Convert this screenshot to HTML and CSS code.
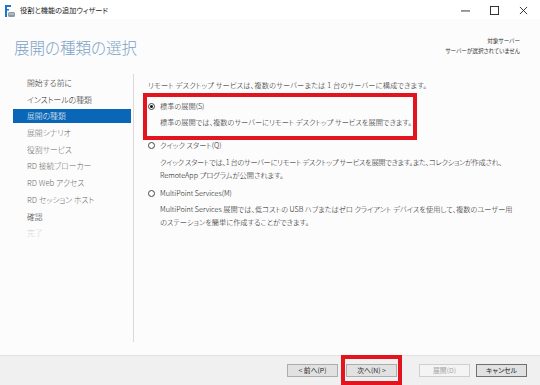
FILE: index.html
```html
<!DOCTYPE html>
<html lang="ja">
<head>
  <meta charset="UTF-8" />
  <title>役割と機能の追加ウィザード</title>
  <link rel="stylesheet" href="styles.css">
</head>
<body>
  <div class="titlebar">
    <svg class="app-icon" width="10" height="12" viewBox="0 0 10 12">
      <rect x="0" y="0" width="2" height="12" fill="#1f74c9"/>
      <rect x="0" y="0" width="6" height="2" fill="#1f74c9"/>
      <rect x="0" y="4" width="4" height="1.5" fill="#1f74c9"/>
      <rect x="3" y="7" width="7" height="5" rx="1.5" fill="#8d9aa8"/>
      <rect x="4" y="8.5" width="5" height="1" fill="#c9d3dc"/>
    </svg>
    <span class="title">役割と機能の追加ウィザード</span>
    <div class="controls">
      <svg width="10" height="10" viewBox="0 0 10 10"><line x1="0" y1="5.5" x2="10" y2="5.5" stroke="#222" stroke-width="1"/></svg>
      <svg width="10" height="10" viewBox="0 0 10 10"><rect x="0.5" y="0.5" width="9" height="9" fill="none" stroke="#222" stroke-width="1"/></svg>
      <svg width="10" height="10" viewBox="0 0 10 10"><path d="M1 1 L9 9 M9 1 L1 9" stroke="#222" stroke-width="1"/></svg>
    </div>
  </div>

  <div class="header">
    <h1>展開の種類の選択</h1>
    <div class="target">
      <div>対象サーバー</div>
      <div>サーバーが選択されていません</div>
    </div>
  </div>

  <div class="main">
    <ul class="steps">
      <li class="done">開始する前に</li>
      <li class="done">インストールの種類</li>
      <li class="current">展開の種類</li>
      <li>展開シナリオ</li>
      <li>役割サービス</li>
      <li>RD 接続ブローカー</li>
      <li>RD Web アクセス</li>
      <li>RD セッション ホスト</li>
      <li class="done">確認</li>
      <li class="off">完了</li>
    </ul>

    <div class="content">
      <p class="intro">リモート デスクトップ サービスは、複数のサーバーまたは 1 台のサーバーに構成できます。</p>

      <div class="opt marked">
        <div class="radio-row"><span class="radio checked"></span>標準の展開(S)</div>
        <p class="desc">標準の展開では、複数のサーバーにリモート デスクトップ サービスを展開できます。</p>
      </div>

      <div class="opt">
        <div class="radio-row"><span class="radio"></span>クイック スタート(Q)</div>
        <p class="desc"><span class="tight">クイック スタートでは、1 台のサーバーにリモート デスクトップ サービスを展開できます。また、コレクションが作成され、</span><br>RemoteApp プログラムが公開されます。</p>
      </div>

      <div class="opt opt-last">
        <div class="radio-row"><span class="radio"></span>MultiPoint Services(M)</div>
        <p class="desc">MultiPoint Services 展開では、低コストの USB ハブまたはゼロ クライアント デバイスを使用して、複数のユーザー用<br>のステーションを簡単に作成することができます。</p>
      </div>
    </div>
  </div>

  <div class="footer">
    <button class="btn">&lt; 前へ(P)</button>
    <span class="mark"><button class="btn">次へ(N) &gt;</button></span>
    <button class="btn" disabled>展開(D)</button>
    <button class="btn cancel">キャンセル</button>
  </div>
</body>
</html>
```

FILE: styles.css
```css
body {
  margin: 0;
  width: 540px;
  height: 385px;
  overflow: hidden;
  background-color: #fcfcfc;
  font-family: "Noto Sans CJK JP", "Noto Sans", sans-serif;
  font-feature-settings: "palt";
  color: #111;
}
.titlebar {
  height: 19px;
  background-color: #fff;
  display: flex;
  align-items: center;
  padding-left: 5px;
}
.app-icon {
  margin-top: 2px;
}
.title {
  margin-left: 5px;
  font-size: 7.2px;
  color: #222;
}
.controls {
  margin-left: auto;
  display: flex;
  gap: 20px;
  padding-right: 12px;
  margin-top: 2px;
}
.controls svg {
  width: 9px;
  height: 9px;
}
.header {
  height: 55px;
  display: flex;
  justify-content: space-between;
  align-items: flex-start;
  padding: 0 20px 0 14px;
}
h1 {
  margin: 18px 0 0;
  font-size: 15.5px;
  line-height: 20px;
  font-weight: 300;
  color: #7aa2c6;
}
.target {
  margin-top: 17px;
  text-align: right;
  font-size: 5.6px;
  line-height: 10px;
  color: #333;
}
.main {
  height: 281px;
  display: flex;
}
.steps {
  list-style: none;
  margin: 0 0 13px;
  padding: 2px 0 0;
  width: 133px;
  border-right: 1px solid #dadada;
  font-size: 7.8px;
  font-weight: 300;
  color: #6a6a6a;
}
.steps li {
  margin-left: 13px;
  width: 118px;
  padding-left: 14px;
  box-sizing: border-box;
  height: 14px;
  line-height: 14px;
  margin-bottom: 2.7px;
}
.steps .done {
  color: #1e1e1e;
}
.steps .current {
  background-color: #0a66b7;
  color: #fff;
}
.steps .off {
  color: #d0d0d0;
}
.content {
  padding: 4.5px 0 0 9px;
  font-size: 7.2px;
  font-weight: 300;
}
.intro {
  margin: 0 0 1.5px 5px;
  line-height: 13px;
  letter-spacing: 0.15px;
}
.opt {
  border-left: 4px solid transparent;
  border-right: 4px solid transparent;
}
.opt.marked {
  width: 266px;
  border: 4px solid #e4141e;
  padding: 2.5px 0 7.5px;
}
.radio-row {
  display: flex;
  align-items: center;
  line-height: 10px;
  padding-left: 0.5px;
}
.opt.marked .radio-row {
  line-height: 13px;
}
.opt.opt-last {
  margin-top: 6.5px;
}
.radio {
  width: 7px;
  height: 7px;
  border: 1px solid #444;
  border-radius: 50%;
  box-sizing: border-box;
  margin-right: 5.5px;
  display: flex;
  align-items: center;
  justify-content: center;
  background-color: #fff;
}
.radio.checked::after {
  content: "";
  width: 3px;
  height: 3px;
  border-radius: 50%;
  background-color: #111;
}
.desc {
  margin: 5.5px 0 0;
  padding-left: 13px;
  line-height: 13px;
  white-space: nowrap;
}
.tight {
  letter-spacing: -0.3px;
}
.opt.marked .desc {
  margin-top: 3px;
}
.opt.opt-last .desc {
  margin-top: 4.5px;
}
.footer {
  height: 30px;
  box-sizing: border-box;
  border-top: 1px solid #e2e2e2;
  background-color: #f0f0f0;
  display: flex;
  align-items: center;
  justify-content: flex-end;
  padding: 0 13px 1px 0;
}
.btn {
  width: 51px;
  height: 13px;
  padding: 0;
  border: 1px solid #adadad;
  background-color: #e1e1e1;
  font-family: inherit;
  font-feature-settings: "palt";
  font-size: 6.8px;
  color: #1e1e1e;
  line-height: 11px;
}
.btn:disabled {
  background-color: #f4f4f4;
  border-color: #cfcfcf;
  color: #a6a6a6;
}
.btn.cancel {
  border-color: #707070;
  margin-left: 6px;
}
.mark {
  position: relative;
  display: flex;
  margin: 0 22px 0 8px;
}
.mark::after {
  content: "";
  position: absolute;
  top: -9px;
  left: -5px;
  right: -5px;
  bottom: -8px;
  border: 4px solid #e4141e;
}
```
